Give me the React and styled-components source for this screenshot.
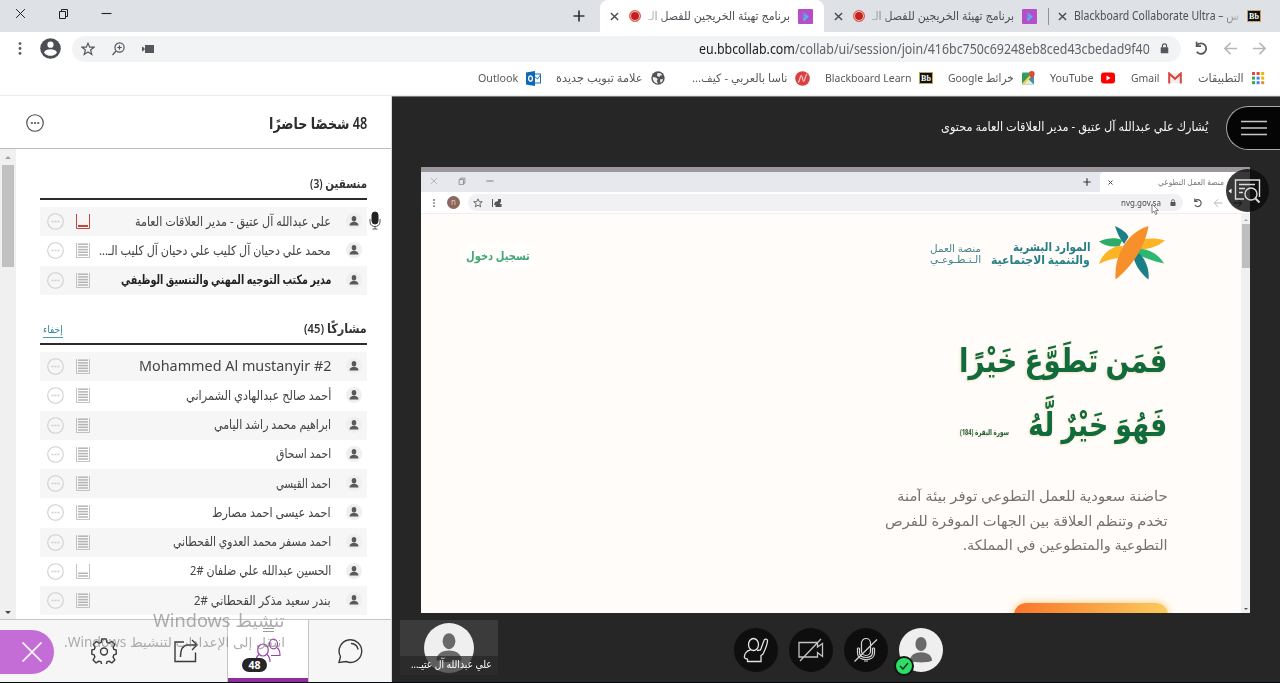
import React, { useLayoutEffect, useRef, useState } from "react";
import styled, { createGlobalStyle, css } from "styled-components";

const GlobalStyle = createGlobalStyle`
  * { box-sizing: border-box; }
  body {
    margin: 0;
    overflow: hidden;
    font-family: "Noto Sans", "DejaVu Sans", sans-serif;
  }
  svg { display: block; flex-shrink: 0; }
`;

/* ---------- text that keeps a given width ---------- */

const FitBox = styled.span`
  display: block;
  flex-shrink: 0;
  width: ${(p) => p.$w}px;
  height: ${(p) => p.$lh || 20}px;
  line-height: ${(p) => p.$lh || 20}px;
  font-size: ${(p) => p.$size || 12}px;
  font-weight: ${(p) => p.$weight || 400};
  color: ${(p) => p.$color || "inherit"};
  font-family: ${(p) => p.$font || "inherit"};
  direction: ${(p) => (p.$ltr ? "ltr" : "rtl")};
  white-space: nowrap;
`;
const FitInner = styled.span`
  display: inline-block;
  transform-origin: ${(p) => (p.$ltr ? "left" : "right")} center;
`;

const Fit = ({ w, lh, size, weight, color, font, ltr, className, children }) => {
  const ref = useRef(null);
  const [scale, setScale] = useState(1);
  useLayoutEffect(() => {
    setScale(w / ref.current.offsetWidth);
  }, [w, children]);
  return (
    <FitBox className={className} $w={w} $lh={lh} $size={size} $weight={weight} $color={color} $font={font} $ltr={ltr}>
      <FitInner ref={ref} $ltr={ltr} style={{ transform: `scaleX(${scale})` }}>
        {children}
      </FitInner>
    </FitBox>
  );
};

/* ---------- page ---------- */

const Page = styled.div`
  width: 1280px;
  height: 683px;
  direction: rtl;
  display: flex;
  flex-direction: column;
  background: #fff;
  border-bottom: 1px solid #05080b;
  overflow: hidden;
  position: relative;
`;
const Spacer = styled.div`
  flex: 1;
`;

/* ---------- browser chrome ---------- */

const TabStrip = styled.div`
  height: 32px;
  display: flex;
  background: #dee1e6;
  flex-shrink: 0;
`;
const Tab = styled.div`
  height: 32px;
  width: ${(p) => p.$w}px;
  padding-right: ${(p) => p.$pad || 11}px;
  display: flex;
  align-items: center;
  color: #4c4f54;
  ${(p) => p.$active && css`
    background: #fff;
    border-radius: 8px 8px 0 0;
  `}
  ${(p) => p.$line && css`
    background: linear-gradient(#8f9297, #8f9297) left center / 1px 17px no-repeat;
  `}
`;
const TabText = styled.div`
  margin: 0 8px 0 ${(p) => p.$gap}px;
  -webkit-mask-image: linear-gradient(to ${(p) => (p.$ltr ? "right" : "left")}, #000 86%, rgba(0, 0, 0, 0.25));
`;
const Recording = styled.span`
  width: 12px;
  height: 12px;
  margin-left: 10px;
  border-radius: 50%;
  border: 1px solid #e0665e;
  background: #c5221f;
  box-shadow: inset 0 0 0 1px #f6d5d2;
`;
const NewTab = styled.div`
  margin-right: 15px;
  display: flex;
  align-items: center;
`;
const WindowButtons = styled.div`
  display: flex;
  gap: 32px;
  padding: 8px 0 0 15px;
`;

const Toolbar = styled.div`
  height: 33px;
  display: flex;
  align-items: center;
  padding: 0 13px 0 14px;
  flex-shrink: 0;
`;
const NavIcons = styled.div`
  display: flex;
  gap: 14px;
  margin-left: 13px;
`;
const Address = styled.div`
  flex: 1;
  height: 26px;
  border-radius: 13px;
  background: #f1f3f4;
  display: flex;
  align-items: center;
  padding: 0 12px 0 9px;
  color: #5f6368;
  gap: 10px;
  b { font-weight: 400; color: #202124; }
`;
const AddressIcons = styled.div`
  display: flex;
  align-items: center;
  gap: 16px;
`;
const ToolbarEnd = styled.div`
  display: flex;
  align-items: center;
  gap: 14px;
  margin-right: 11px;
`;

const Bookmarks = styled.div`
  height: 31px;
  display: flex;
  align-items: center;
  padding: 0 15px 4px 0;
  color: #55585c;
  flex-shrink: 0;
  border-bottom: 1px solid #ececec;
`;
const Bookmark = styled.div`
  display: flex;
  align-items: center;
  gap: ${(p) => p.$gap || 8}px;
  margin-left: ${(p) => p.$after || 16}px;
`;

const CrossIcon = ({ size = 9, stroke = "#45484c", w = 1.5 }) => (
  <svg width={size} height={size} viewBox="0 0 10 10" fill="none" stroke={stroke} strokeWidth={w}>
    <path d="M1 1l8 8M9 1L1 9" />
  </svg>
);
const PlusIcon = ({ size = 12 }) => (
  <svg width={size} height={size} viewBox="0 0 12 12" stroke="#33363a" strokeWidth="1.7">
    <path d="M6 0.5v11M0.5 6h11" />
  </svg>
);
const RestoreIcon = ({ size = 11, stroke = "#222" }) => (
  <svg width={size} height={size} viewBox="0 0 11 11" fill="none" stroke={stroke}>
    <path d="M1.500 3.500h6V10.500h-6zM3.500 3.500v-2h6v7H7.500" />
  </svg>
);
const MinusIcon = ({ size = 11, stroke = "#222" }) => (
  <svg width={size} height={size} viewBox="0 0 11 11" stroke={stroke} strokeWidth="1.1">
    <path d="M0.500 5.500h10" />
  </svg>
);
const ArrowIcon = ({ left, size = 16, stroke = "#b4b6b9" }) => (
  <svg width={size} height={size} viewBox="0 0 16 16" fill="none" stroke={stroke} strokeWidth="1.6">
    <path d={left ? "M15 8H2.500M8 2L2 8l6 6" : "M1 8h12.500M8 2l6 6-6 6"} />
  </svg>
);
const ReloadIcon = ({ size = 16 }) => (
  <svg width={size} height={size} viewBox="0 0 16 16" fill="none" stroke="#54575b" strokeWidth="1.900">
    <path d="M3.300 4.300A5.600 5.600 0 1 1 3 11.500" />
    <path d="M2.800 0.800v4.700h4.700" />
  </svg>
);
const LockIcon = ({ size = 9 }) => (
  <svg width={size} height={size * 1.2} viewBox="0 0 10 12" fill="none">
    <path d="M2.700 5V3.300a2.300 2.300 0 0 1 4.600 0V5" stroke="#54575b" strokeWidth="1.300" />
    <rect x="0.800" y="4.800" width="8.400" height="6.700" rx="0.800" fill="#54575b" />
  </svg>
);
const StarIcon = ({ size = 14 }) => (
  <svg width={size} height={size} viewBox="0 0 14 14" fill="none" stroke="#54575b" strokeWidth="1.200">
    <path d="M7 1.200l1.700 4h4.300L9.600 8l1.200 4.500L7 10l-3.800 2.500L4.400 8 1 5.200h4.300z" />
  </svg>
);
const DotsIcon = ({ h = 13 }) => (
  <svg width="12" height={h} viewBox="0 0 12 13" fill="#54575b">
    <circle cx="6" cy="1.600" r="1.400" />
    <circle cx="6" cy="6.500" r="1.400" />
    <circle cx="6" cy="11.400" r="1.400" />
  </svg>
);
const BbIcon = () => (
  <svg width="14" height="12" viewBox="0 0 14 12">
    <rect width="14" height="12" fill="#bfa25e" />
    <rect x="1" y="1" width="12" height="10" fill="#111" />
    <text x="7" y="9" textAnchor="middle" fontSize="8" fontWeight="700" fill="#fff" fontFamily="Liberation Serif" direction="ltr">Bb</text>
  </svg>
);
const CollabIcon = () => (
  <svg width="15" height="15" viewBox="0 0 15 15">
    <rect width="15" height="15" rx="1" fill="#b44fc9" />
    <path d="M5 2.500L11 7.500l-6 5z" fill="#8a7fdc" />
    <path d="M6.500 4.500L10.500 7.500l-4 4.500-1.500-1.500L8 7.500z" fill="#48bfe3" />
  </svg>
);
const AppsIcon = () => {
  const colors = ["#e8453c", "#e8453c", "#f4b400", "#34a853", "#4285f4", "#f4b400", "#34a853", "#4285f4", "#ea8b2c"];
  return (
    <svg width="14" height="14" viewBox="0 0 14 14">
      {colors.map((c, i) => (
        <rect key={i} x={1 + (i % 3) * 4.6} y={1 + Math.floor(i / 3) * 4.6} width="3" height="3" fill={c} />
      ))}
    </svg>
  );
};
const GmailIcon = () => (
  <svg width="14" height="12" viewBox="0 0 14 12">
    <path d="M1 1h12v10H1z" fill="#f3efef" />
    <path d="M1.200 11.500V1.500L7 6.800l5.800-5.300v10" fill="none" stroke="#d8433a" strokeWidth="2" />
  </svg>
);
const YoutubeIcon = () => (
  <svg width="14" height="12" viewBox="0 0 14 12">
    <rect y="0.500" width="14" height="11" rx="3" fill="#f00" />
    <path d="M5.500 3.500l4 2.500-4 2.500z" fill="#fff" />
  </svg>
);
const MapsIcon = () => (
  <svg width="14" height="14" viewBox="0 0 14 14">
    <rect x="1" y="1.500" width="12" height="12" rx="1" fill="#34a065" />
    <path d="M1 3v9l6-5z" fill="#2d9a58" />
    <path d="M2 13.500L7.300 8l5.500 5.500z" fill="#e6e8ea" />
    <path d="M1 12.500L10 3l1.500 1.500L3 13.500z" fill="#f7d04a" />
    <path d="M13 6v6L9.500 8z" fill="#4a86e8" />
    <path d="M10.800 0a2.900 2.900 0 0 1 2.900 2.900c0 2-2 2.600-2.900 5.300C9.900 5.500 7.900 4.900 7.900 2.900A2.900 2.900 0 0 1 10.800 0z" fill="#dd4b3e" />
  </svg>
);
const NasaIcon = () => (
  <svg width="15" height="15" viewBox="0 0 15 15">
    <circle cx="7.500" cy="7.500" r="7.300" fill="#dc3f3f" />
    <path d="M3 11.500c2-1 2-7 3.300-7s1.200 6 2.400 6 1.300-6.500 3.500-7.500" fill="none" stroke="#f8c9c9" strokeWidth="1.200" />
  </svg>
);
const GlobeIcon = () => (
  <svg width="14" height="14" viewBox="0 0 14 14">
    <circle cx="7" cy="7" r="6.700" fill="#505357" />
    <path d="M1.800 6l3 .5 2 1.500-1 2 1.200 2.500C4 12.500 1.500 10 1.800 6zM6.500 2l3 .2 2 2-2.500.3-.5 1.500-2.500-1zM9 8.500l3-.5c0 2-1.500 3.500-2.500 4z" fill="#fff" opacity="0.900" />
  </svg>
);
const OutlookIcon = () => (
  <svg width="15" height="15" viewBox="0 0 15 15">
    <rect x="8" y="3" width="6.500" height="9" fill="#fff" stroke="#1b73c0" />
    <path d="M8.500 5.500l3 2.500 3-4" fill="none" stroke="#1b73c0" />
    <path d="M0 1.500L9 0v15l-9-1.500z" fill="#0f67b5" />
    <ellipse cx="4.500" cy="7.500" rx="1.900" ry="2.700" fill="none" stroke="#fff" strokeWidth="1.300" />
  </svg>
);

const BOOKMARKS = [
  { icon: <AppsIcon />, text: "التطبيقات", w: 46, gap: 7 },
  { icon: <GmailIcon />, text: "Gmail", w: 29, ltr: true },
  { icon: <YoutubeIcon />, text: "YouTube", w: 43, ltr: true, after: 15 },
  { icon: <MapsIcon />, text: "خرائط Google", w: 66, gap: 7, after: 15 },
  { icon: <BbIcon />, text: "Blackboard Learn", w: 86, ltr: true, after: 15 },
  { icon: <NasaIcon />, text: "ناسا بالعربي - كيف...", w: 96, after: 26 },
  { icon: <GlobeIcon />, text: "علامة تبويب جديدة", w: 87, after: 15 },
  { icon: <OutlookIcon />, text: "Outlook", w: 40, ltr: true },
];

const Chrome = () => (
  <>
    <TabStrip>
      <Tab $w={232} $pad={19} $line>
        <BbIcon />
        <TabText $gap={7} $ltr>
          <Fit w={165} size={12} ltr>Blackboard Collaborate Ultra – س</Fit>
        </TabText>
        <CrossIcon />
      </Tab>
      <Tab $w={224}>
        <CollabIcon />
        <TabText $gap={7}>
          <Fit w={142} size={12}>برنامج تهيئة الخريجين للفصل الـ</Fit>
        </TabText>
        <Recording />
        <CrossIcon />
      </Tab>
      <Tab $w={224} $active>
        <CollabIcon />
        <TabText $gap={7}>
          <Fit w={142} size={12}>برنامج تهيئة الخريجين للفصل الـ</Fit>
        </TabText>
        <Recording />
        <CrossIcon />
      </Tab>
      <NewTab><PlusIcon /></NewTab>
      <Spacer />
      <WindowButtons>
        <MinusIcon />
        <RestoreIcon />
        <CrossIcon size={11} stroke="#222" w={0.9} />
      </WindowButtons>
    </TabStrip>
    <Toolbar>
      <NavIcons>
        <ArrowIcon size={15} />
        <ArrowIcon left size={15} />
        <ReloadIcon size={15} />
      </NavIcons>
      <Address>
        <LockIcon />
        <Fit w={451} size={14} ltr>
          <b>eu.bbcollab.com</b>/collab/ui/session/join/416bc750c69248eb8ced43cbedad9f40
        </Fit>
        <Spacer />
        <AddressIcons>
          <svg width="12" height="10" viewBox="0 0 12 10" fill="#54575b">
            <path d="M3 1h9v8H3zM0 2.500L2.500 4v2L0 7.500z" />
          </svg>
          <svg width="15" height="14" viewBox="0 0 15 14" fill="none" stroke="#54575b" strokeWidth="1.200">
            <circle cx="8.500" cy="5.500" r="4.600" />
            <path d="M5 9l-3.500 4M6.200 5.500h4.600M8.500 3.200v4.600" />
          </svg>
          <StarIcon />
        </AddressIcons>
      </Address>
      <ToolbarEnd>
        <svg width="21" height="21" viewBox="0 0 21 21">
          <circle cx="10.500" cy="10.500" r="10.300" fill="#4b4e53" />
          <circle cx="10.500" cy="6.700" r="3.100" fill="#fff" />
          <path d="M4 14.500c1.500-4.300 11.500-4.300 13 0a8 8 0 0 1-13 0z" fill="#fff" />
        </svg>
        <DotsIcon />
      </ToolbarEnd>
    </Toolbar>
    <Bookmarks>
      {BOOKMARKS.map((b) => (
        <Bookmark key={b.text} $gap={b.gap} $after={b.after}>
          {b.icon}
          <Fit w={b.w} size={11.5} ltr={b.ltr}>{b.text}</Fit>
        </Bookmark>
      ))}
    </Bookmarks>
  </>
);

/* ---------- shared screen ---------- */

const Body = styled.div`
  flex: 1;
  min-height: 0;
  display: flex;
`;
const Stage = styled.main`
  width: 888px;
  background: #262626;
  border-top: 1px solid #77797a;
  display: flex;
  flex-direction: column;
  position: relative;
`;
const StageHeader = styled.div`
  height: 70px;
  padding: 9px 0 0;
  display: flex;
  align-items: flex-start;
  color: #f4f4f4;
`;
const MenuButton = styled.button`
  width: 54px;
  height: 44px;
  padding: 0;
  border: 1px solid #a8a8a8;
  border-right: 0;
  border-radius: 22px 0 0 22px;
  background: #050505;
  display: flex;
  align-items: center;
  justify-content: center;
`;
const Sharing = styled.div`
  margin: 11px 18px 0 0;
`;
const Shared = styled.section`
  width: 829px;
  height: 446px;
  margin-right: 30px;
  background: #fffcf9;
  border-top: 5px solid #9b979c;
  display: flex;
  flex-direction: column;
  overflow: hidden;
`;
const MiniTabs = styled.div`
  height: 20px;
  display: flex;
  align-items: center;
  background: #e7e8ed;
`;
const MiniTab = styled.div`
  width: 150px;
  height: 20px;
  padding-right: 26px;
  background: #fff;
  border-radius: 4px 4px 0 0;
  display: flex;
  align-items: center;
  gap: 45px;
`;
const MiniPlus = styled.div`
  margin-right: 9px;
`;
const MiniButtons = styled.div`
  display: flex;
  gap: 20px;
  margin: 0 0 3px 9px;
`;
const MiniBar = styled.div`
  height: 22px;
  padding: 0 7px;
  background: #fff;
  border-bottom: 1px solid #f0eeee;
  display: flex;
  align-items: center;
`;
const MiniNav = styled.div`
  display: flex;
  gap: 10px;
  margin-left: 10px;
`;
const MiniAddress = styled.div`
  flex: 1;
  height: 17px;
  border-radius: 9px;
  background: #f1f1f4;
  display: flex;
  align-items: center;
  gap: 9px;
  padding: 0 7px 0 5px;
`;
const Initial = styled.div`
  width: 13px;
  height: 13px;
  margin: 0 8px 0 7px;
  border-radius: 50%;
  background: #8d675d;
  color: #dccac5;
  font-size: 8px;
  line-height: 12px;
  text-align: center;
`;
const Site = styled.div`
  flex: 1;
  min-height: 0;
  display: flex;
`;
const SiteScroll = styled.div`
  width: 9px;
  background: #f0eff1;
  display: flex;
  flex-direction: column;
  align-items: center;
  justify-content: space-between;
  padding: 5px 0 3px;
`;
const SiteThumb = styled.div`
  width: 8px;
  height: 44px;
  margin: 3px 0 auto;
  background: #bebdc0;
`;
const Triangle = styled.span`
  border: ${(p) => p.$s}px solid transparent;
  ${(p) => (p.$up ? "border-top-width: 0; border-bottom-color:" : "border-bottom-width: 0; border-top-color:")} ${(p) => p.$c};
`;
const SiteContent = styled.div`
  flex: 1;
  padding: 11px 76px 0 40px;
  display: flex;
  flex-direction: column;
`;
const SiteHeader = styled.div`
  display: flex;
  height: 56px;
`;
const Ministry = styled.div`
  margin: 15px 9px 0 0;
`;
const Platform = styled.div`
  margin: 18px 10px 0 0;
`;
const Login = styled.div`
  width: 74px;
  height: 26px;
  margin-top: 18px;
  display: flex;
  align-items: center;
  justify-content: center;
  background: #fffefd;
`;
const Verse = styled.div`
  margin: 46px -2px 0 0;
  filter: drop-shadow(-1px 1px 1px #f1e2bd);
`;
const VerseLine = styled.div`
  display: flex;
  height: ${(p) => p.$h}px;
  align-items: center;
`;
const Surah = styled.div`
  margin: 16px 19px 0 0;
`;
const Blurb = styled.div`
  margin: 29px -3px 0 0;
`;
const CallToAction = styled.div`
  flex-shrink: 0;
  width: 154px;
  height: 40px;
  margin: 45px -3px 0 0;
  border-radius: 12px;
  background: linear-gradient(to left, #fbcb5c, #f9762a);
  box-shadow: 0 0 8px #fcc873;
`;
const Magnifier = styled.button`
  position: absolute;
  right: 11px;
  top: 72px;
  width: 43px;
  height: 43px;
  border: 0;
  padding: 0;
  border-radius: 50%;
  background: rgba(12, 12, 12, 0.82);
`;
const Pointer = styled.svg`
  position: absolute;
  right: 121px;
  top: 106px;
`;

const StarLogo = () => (
  <svg width="66" height="56" viewBox="0 0 66 56">
    <path d="M16 1c7 3 12 7 13.500 11L25 19C21 14 18 8 16 1z" fill="#1b7f86" />
    <path d="M0 16.500c9-4 17-4 23.500-1.500L20.500 21C13 22.500 6 21 0 16.500z" fill="#2cab69" />
    <path d="M0 39c3-9 9-15 19-18h5l-5 12C12 34 5 36 0 39z" fill="#fcb425" />
    <path d="M66 15.500c-10-3-20-2.500-28 .5l-6 8c12 2 25-1 34-8.500z" fill="#fcb425" />
    <path d="M65 38.500C60 30 52 25 41 23.500L33 26c9 6 20 10 32 12.500z" fill="#2cb86e" />
    <path d="M49.500 54.500c1-9-2-18-8-25L33 26c2 13 8 22 16.500 28.500z" fill="#1b7f86" />
    <path d="M49.500 1C30 7 15 27 16.500 54.500 30 44 46 24 49.500 1z" fill="#f7902a" />
  </svg>
);

const Website = () => (
  <Site>
    <SiteScroll>
      <Triangle $up $s={2.5} $c="#a3a2a5" />
      <SiteThumb />
      <Triangle $s={2.5} $c="#555" />
    </SiteScroll>
    <SiteContent>
      <SiteHeader>
        <StarLogo />
        <Ministry>
          <Fit w={77} lh={13} size={12} weight={700} color="#257f86">الموارد البشرية</Fit>
          <Fit w={99} lh={13} size={12} weight={700} color="#257f86">والتنمية الاجتماعية</Fit>
        </Ministry>
        <Platform>
          <Fit w={51} lh={11} size={10} color="#43868b">منصة العمل</Fit>
          <Fit w={51} lh={11} size={10} color="#43868b">الـتـطـوعـي</Fit>
        </Platform>
        <Spacer />
        <Login>
          <Fit w={64} size={12} weight={700} color="#43a878">تسجيل دخول</Fit>
        </Login>
      </SiteHeader>
      <Verse>
        <VerseLine $h={66}>
          <Fit w={208} lh={66} size={33} weight={600} color="#116b3c">فَمَن تَطَوَّعَ خَيْرًا</Fit>
        </VerseLine>
        <VerseLine $h={62}>
          <Fit w={139} lh={62} size={33} weight={600} color="#116b3c">فَهُوَ خَيْرٌ لَّهُ</Fit>
          <Surah>
            <Fit w={49} lh={12} size={8} weight={700} color="#245f42">سورة البقرة (184)</Fit>
          </Surah>
        </VerseLine>
      </Verse>
      <Blurb>
        <Fit w={271} lh={24.5} size={14} color="#77716f">حاضنة سعودية للعمل التطوعي توفر بيئة آمنة</Fit>
        <Fit w={283} lh={24.5} size={14} color="#77716f">تخدم وتنظم العلاقة بين الجهات الموفرة للفرص</Fit>
        <Fit w={205} lh={24.5} size={14} color="#77716f">التطوعية والمتطوعين في المملكة.</Fit>
      </Blurb>
      <CallToAction />
    </SiteContent>
  </Site>
);

const Controls = styled.div`
  flex: 1;
  display: flex;
  align-items: flex-start;
  gap: 11px;
  padding: 15px 337px 0 8px;
`;
const RoundButton = styled.button`
  position: relative;
  width: 44px;
  height: 44px;
  padding: 0;
  border: 0;
  border-radius: 50%;
  background: ${(p) => (p.$light ? "#efefef" : "#0e0e0e")};
  display: flex;
  align-items: center;
  justify-content: center;
`;
const Status = styled.span`
  position: absolute;
  left: -5px;
  bottom: -4px;
  width: 20px;
  height: 20px;
  border: 2px solid #0b1a10;
  border-radius: 50%;
  background: #2fdc68;
  display: flex;
  align-items: center;
  justify-content: center;
`;
const Speaker = styled.div`
  width: 98px;
  height: 55px;
  margin-top: -8px;
  background: #3b3b3b;
  position: relative;
  display: flex;
  justify-content: center;
`;
const SpeakerFace = styled.div`
  width: 50px;
  height: 50px;
  margin-top: 3px;
  border-radius: 50%;
  background: #efefef;
  overflow: hidden;
`;
const SpeakerName = styled.div`
  position: absolute;
  left: 0;
  right: 0;
  bottom: 0;
  height: 19px;
  padding-right: 6px;
  background: rgba(38, 38, 38, 0.72);
`;

const MicMuted = () => (
  <svg width="26" height="26" viewBox="0 0 26 26" fill="none" stroke="#d6d6d6" strokeWidth="1.200">
    <rect x="8.500" y="1.500" width="9" height="17" rx="4.500" />
    <path d="M4.500 11v5c0 4 3.500 6.500 8.500 6.500s8.500-2.500 8.500-6.500v-5M6.500 11v4.500c0 3 2.500 5 6.500 5s6.500-2 6.500-5V11M4.500 11h2M19.500 11h2M11 24h4M1.500 24.500L24 2.500" />
  </svg>
);
const CameraOff = () => (
  <svg width="26" height="26" viewBox="0 0 26 26" fill="none" stroke="#c4c4c4" strokeWidth="1.300">
    <path d="M1 5.500h18.500v4.500l5-3.500v13l-5-4v4.500H1zM2 24L23 2" />
  </svg>
);
const RaiseHand = () => (
  <svg width="26" height="26" viewBox="0 0 26 26" fill="none" stroke="#e4e4e4" strokeWidth="1.300">
    <ellipse cx="10.500" cy="7.500" rx="5" ry="6" />
    <path d="M7.500 13C3 13.500 1 18 1.500 20.500c.5 1.500 3 1.500 3 1v3h13.500v-6l2-1.500c2-4 4-8 4.500-13 .3-2-3-2.600-3.500-.5l-3.500 9.500-3.500.5" />
  </svg>
);

const Head = ({ size }) => (
  <svg width={size} height={size} viewBox="0 0 44 44" fill="#696969">
    <ellipse cx="22" cy="16" rx="5.600" ry="7" />
    <path d="M11 32.500c0-11 22-11 22 0-3 2.500-19 2.500-22 0z" />
  </svg>
);

const SharedScreen = () => (
  <Stage>
    <StageHeader>
      <MenuButton>
        <svg width="26" height="16" viewBox="0 0 26 16" stroke="#c9c9c9" strokeWidth="1.300">
          <path d="M0 1.500h26M0 8h26M0 14.500h26" />
        </svg>
      </MenuButton>
      <Sharing>
        <Fit w={267} size={12.5}>يُشارك علي عبدالله آل عتيق - مدير العلاقات العامة محتوى</Fit>
      </Sharing>
    </StageHeader>
    <Shared>
      <MiniTabs>
        <MiniTab>
          <Fit w={66} size={8.5} color="#77777b">منصة العمل التطوعي</Fit>
          <CrossIcon size={5} w={2} />
        </MiniTab>
        <MiniPlus><PlusIcon size={8} /></MiniPlus>
        <Spacer />
        <MiniButtons>
          <MinusIcon size={8} stroke="#666" />
          <RestoreIcon size={8} stroke="#777" />
          <CrossIcon size={8} stroke="#aaa" w={1} />
        </MiniButtons>
      </MiniTabs>
      <MiniBar>
        <MiniNav>
          <ArrowIcon size={10} stroke="#222" />
          <ArrowIcon left size={10} />
          <ReloadIcon size={10} />
        </MiniNav>
        <MiniAddress>
          <LockIcon size={6} />
          <Fit w={40} size={9} ltr color="#48484c">nvg.gov.sa</Fit>
          <Spacer />
          <svg width="10" height="10" viewBox="0 0 10 10" fill="#55555a">
            <path d="M0 1h1v8H0zM3 4l3-1V1h3v3.500H8V6h1.500v3H3.500V7L2 7z" />
          </svg>
          <StarIcon size={10} />
        </MiniAddress>
        <Initial>n</Initial>
        <DotsIcon h={8} />
      </MiniBar>
      <Website />
    </Shared>
    <Controls>
      <RoundButton $light>
        <Head size={44} />
        <Status>
          <svg width="10" height="8" viewBox="0 0 10 8" fill="none" stroke="#0d3a1c" strokeWidth="1.500">
            <path d="M1 4l3 3 5-6" />
          </svg>
        </Status>
      </RoundButton>
      <RoundButton><MicMuted /></RoundButton>
      <RoundButton><CameraOff /></RoundButton>
      <RoundButton><RaiseHand /></RoundButton>
      <Spacer />
      <Speaker>
        <SpeakerFace><Head size={50} /></SpeakerFace>
        <SpeakerName>
          <Fit w={81} lh={16} size={11} color="#fff">علي عبدالله آل عتيـ...</Fit>
        </SpeakerName>
      </Speaker>
    </Controls>
    <Magnifier>
      <svg width="43" height="43" viewBox="0 0 43 43" fill="none" stroke="#dcdcdc" strokeWidth="1.400">
        <path d="M18 30H9.500V11h24v17M13 15.500h16M13 19.500h6M13 23.500h4" />
        <circle cx="25" cy="25" r="6" />
        <path d="M29.500 29.500l4 4" strokeWidth="2" />
        <path d="M5.500 19.500v5l-3-2.500z" fill="#fff" stroke="none" />
      </svg>
    </Magnifier>
    <Pointer width="8" height="12" viewBox="0 0 8 12" fill="#fff" stroke="#77737c" strokeWidth="0.900">
      <path d="M1 1v9l2-2 1.500 3.500 1.500-.7L4.600 7.500H7.500z" />
    </Pointer>
  </Stage>
);

/* ---------- attendees panel ---------- */

const Panel = styled.aside`
  width: 392px;
  padding-top: 1px;
  border-right: 1px solid #d9d9d9;
  background: #fff;
  display: flex;
  flex-direction: column;
`;
const PanelHeader = styled.div`
  height: 52px;
  padding: 0 24px 0 26px;
  border-bottom: 1px solid #bdbdbd;
  display: flex;
  align-items: center;
  justify-content: space-between;
  flex-shrink: 0;
`;
const PanelBody = styled.div`
  height: 470px;
  display: flex;
  flex-shrink: 0;
`;
const List = styled.div`
  flex: 1;
  padding: 24px 24px 0;
  overflow: hidden;
`;
const ScrollTrack = styled.div`
  width: 16px;
  background: #f0f0f0;
  display: flex;
  flex-direction: column;
  align-items: center;
  padding: 7px 0 5px;
`;
const ScrollThumb = styled.div`
  width: 12px;
  height: 102px;
  margin: 6px 0 auto;
  background: #c1c1c1;
`;
const Group = styled.section`
  height: ${(p) => p.$h}px;
`;
const GroupTitle = styled.div`
  height: 27px;
  margin-bottom: 7px;
  border-bottom: 2px solid #2b2b2b;
  display: flex;
  justify-content: space-between;
`;
const HideLink = styled.a`
  height: 17px;
  margin: 3px 0 0 3px;
  border-bottom: 1px solid #4f9ba8;
`;
const Row = styled.div`
  height: 29.25px;
  padding: 0 1px 0 7px;
  display: flex;
  align-items: center;
  background: ${(p) => (p.$shade ? "#f6f6f6" : "#fff")};
`;
const RowName = styled.div`
  padding-bottom: 2px;
`;
const Avatar = styled.div`
  width: 16px;
  height: 16px;
  margin: 0 4px 1px 15px;
  border-radius: 50%;
  background: #efefef;
`;
const SignalSvg = styled.svg`
  margin-left: 12px;
`;
const Talking = styled.svg`
  position: absolute;
  left: 369px;
  top: 211px;
`;

const MoreIcon = ({ color, dots, size = 17 }) => (
  <svg width={size} height={size} viewBox="0 0 17 17" fill="none" stroke={color}>
    <circle cx="8.500" cy="8.500" r="7.800" strokeWidth="1.100" />
    <path d="M4.500 8.500h2M7.500 8.500h2M10.500 8.500h2" stroke={dots || color} strokeWidth="1.500" />
  </svg>
);

// connection strength, filled from the bottom
const Signal = ({ level, alert }) => {
  const color = alert ? "#c4473f" : "#b4b4b4";
  return (
    <SignalSvg width="14" height="15" viewBox="0 0 14 15" fill="none" stroke={color}>
      <path d="M0.500 0v14.500h13V0" strokeOpacity={alert ? 1 : 0.8} />
      {Array.from({ length: level }, (_, i) => (
        <path key={i} d={`M2 ${12 - i * 2.7}h10`} strokeWidth={alert ? 2 : 1.5} />
      ))}
    </SignalSvg>
  );
};

const MODERATORS = [
  { name: "علي عبدالله آل عتيق - مدير العلاقات العامة", w: 196, level: 1, alert: true },
  { name: "محمد علي دحيان آل كليب علي دحيان آل كليب الـ...", w: 232, level: 5 },
  { name: "مدير مكتب التوجيه المهني والتنسيق الوظيفي", w: 210, level: 5, bold: true },
];
const PARTICIPANTS = [
  { name: "Mohammed Al mustanyir #2", w: 192, level: 5, ltr: true },
  { name: "أحمد صالح عبدالهادي الشمراني", w: 145, level: 5 },
  { name: "ابراهيم محمد راشد اليامي", w: 117, level: 5 },
  { name: "احمد اسحاق", w: 55, level: 5 },
  { name: "احمد القيسي", w: 55, level: 5 },
  { name: "احمد عيسى احمد مصارط", w: 119, level: 5 },
  { name: "احمد مسفر محمد العدوي القحطاني", w: 158, level: 5 },
  { name: "الحسين عبدالله علي ضلفان #2", w: 141, level: 2 },
  { name: "بندر سعيد مذكر القحطاني #2", w: 137, level: 5 },
];

const Person = ({ person, index }) => (
  <Row $shade={index % 2 === 0}>
    <Avatar>
      <svg width="16" height="16" viewBox="0 0 16 16" fill="#595959">
        <ellipse cx="8" cy="5.700" rx="2.300" ry="2.700" />
        <path d="M3.500 12.500c0-5 9-5 9 0z" />
      </svg>
    </Avatar>
    <RowName>
      <Fit
        w={person.w}
        size={person.ltr ? 14 : 13}
        weight={person.bold ? 700 : 400}
        color={person.bold ? "#222" : "#444"}
        ltr={person.ltr}
      >
        {person.name}
      </Fit>
    </RowName>
    <Spacer />
    <Signal level={person.level} alert={person.alert} />
    <MoreIcon color="#cfcfcf" />
  </Row>
);

const PanelTabs = styled.nav`
  flex: 1;
  display: flex;
  background: #f6f6f6;
  border-top: 1px solid #c6c6c6;
`;
const PanelTab = styled.button`
  position: relative;
  width: 82px;
  padding: 0;
  border: 0;
  background: transparent;
  display: flex;
  align-items: center;
  justify-content: center;
  ${(p) => p.$active && css`
    background: #fff;
    border: solid #c6c6c6;
    border-width: 0 1px;
    box-shadow: inset 0 -4px #8f2f9f;
  `}
`;
const Count = styled.span`
  position: absolute;
  left: 14px;
  bottom: 10px;
  width: 25px;
  height: 14px;
  border-radius: 7px;
  background: #262626;
  color: #fff;
  font: 700 10.5px/14px "Noto Sans", sans-serif;
`;
const CloseButton = styled.button`
  width: 54px;
  height: 44px;
  margin: 10px auto 0 0;
  border: 0;
  padding: 0 10px 0 0;
  border-radius: 0 22px 22px 0;
  background: #c56dd7;
`;
const Watermark = styled.div`
  position: absolute;
  left: 64px;
  top: 608px;
  width: 221px;
  color: rgba(125, 125, 125, 0.62);
  pointer-events: none;
`;

const Attendees = () => (
  <Panel>
    <PanelHeader>
      <Fit w={98} lh={26} size={15.5} weight={600} color="#2c2c2c">48 شخصًا حاضرًا</Fit>
      <MoreIcon color="#4a4a4a" size={18} />
    </PanelHeader>
    <PanelBody>
      <List>
        <Group $h={145}>
          <GroupTitle>
            <Fit w={57} size={13} weight={600} color="#333">منسقين (3)</Fit>
          </GroupTitle>
          {MODERATORS.map((p, i) => <Person key={p.name} person={p} index={i} />)}
        </Group>
        <Group>
          <GroupTitle>
            <Fit w={63} size={13} weight={600} color="#333">مشاركًا (45)</Fit>
            <HideLink><Fit w={20} lh={16} size={10} color="#318a9b">إخفاء</Fit></HideLink>
          </GroupTitle>
          {PARTICIPANTS.map((p, i) => <Person key={p.name} person={p} index={i} />)}
        </Group>
      </List>
      <ScrollTrack>
        <Triangle $up $s={3.5} $c="#a0a0a0" />
        <ScrollThumb />
        <Triangle $s={3.5} $c="#444" />
      </ScrollTrack>
    </PanelBody>
    <PanelTabs>
      <PanelTab>
        <svg width="26" height="26" viewBox="0 0 26 26" fill="none" stroke="#3a3a3a" strokeWidth="1.400">
          <path d="M3.500 18.500A11.300 11.300 0 1 1 9 23.500L2 24.500z" />
          <path d="M14.500 5.500a7.500 7.500 0 0 1 6.500 5.500" strokeLinecap="round" />
        </svg>
      </PanelTab>
      <PanelTab $active>
        <svg width="26" height="54" viewBox="0 0 26 54" fill="none" stroke="#9c3fae" strokeWidth="1.200">
          <path d="M8 4.500h11M8 7.500h11" stroke="#9a9a9a" />
          <ellipse cx="18.500" cy="20" rx="4" ry="4.800" />
          <path d="M21.500 23.500c2.500 1 3.500 3 3.500 8h-9" />
          <ellipse cx="8" cy="26" rx="5.300" ry="6" />
          <path d="M4 30.500c-2 1.500-3 3-3 7M12 30.500c2 1.500 3 4 3 7.500" />
        </svg>
        <Count>48</Count>
      </PanelTab>
      <PanelTab>
        <svg width="24" height="24" viewBox="0 0 24 24" fill="none" stroke="#3a3a3a" strokeWidth="1.400">
          <path d="M10 3H1v19.500h20.500v-9" />
          <path d="M6.500 18C6.500 10 9 6 14 6h8.500M18 1l5 5-5 5" />
        </svg>
      </PanelTab>
      <PanelTab>
        <svg width="26" height="26" viewBox="0 0 26 26" fill="none" stroke="#3a3a3a" strokeWidth="1.400" strokeLinejoin="round">
          <path d="M10.800 1h4.400l.7 3.300 2.100.9 2.900-1.800 3 3-1.800 2.900.8 2.100 2.300.6v4.200l-2.300.7-.9 2.100 1.800 2.900-3 3-2.900-1.800-2 .8-.7 3.300h-4.400l-.7-3.300-2.100-.8-2.900 1.800-3-3 1.800-2.900-.8-2.100-2.300-.700V12l2.500-.6.8-2.100-1.800-2.900 3-3 2.900 1.800 2-.9z" />
          <circle cx="13" cy="13.500" r="3.500" />
        </svg>
      </PanelTab>
      <CloseButton>
        <svg width="44" height="20" viewBox="0 0 44 20" stroke="#fff" strokeWidth="1.700">
          <path d="M22.500 0.500l19 19M41.500 0.500l-19 19" />
        </svg>
      </CloseButton>
    </PanelTabs>
  </Panel>
);

const App = () => {
  return (
    <>
      <GlobalStyle />
      <Page>
        <Chrome />
        <Body>
          <SharedScreen />
          <Attendees />
        </Body>
        <Talking width="12" height="19" viewBox="0 0 12 19" fill="none" stroke="#555">
          <rect x="3" y="1" width="6" height="12" rx="3" fill="#222" stroke="#222" />
          <path d="M1 8v3c0 6 10 6 10 0V8M6 15.500V18M3.500 18h5" />
        </Talking>
        <Watermark>
          <Fit w={132} lh={24} size={18}>تنشيط Windows</Fit>
          <Fit w={221} lh={20} size={13.5}>انتقل إلى الإعدادات لتنشيط Windows.</Fit>
        </Watermark>
      </Page>
    </>
  );
};

export default App;
